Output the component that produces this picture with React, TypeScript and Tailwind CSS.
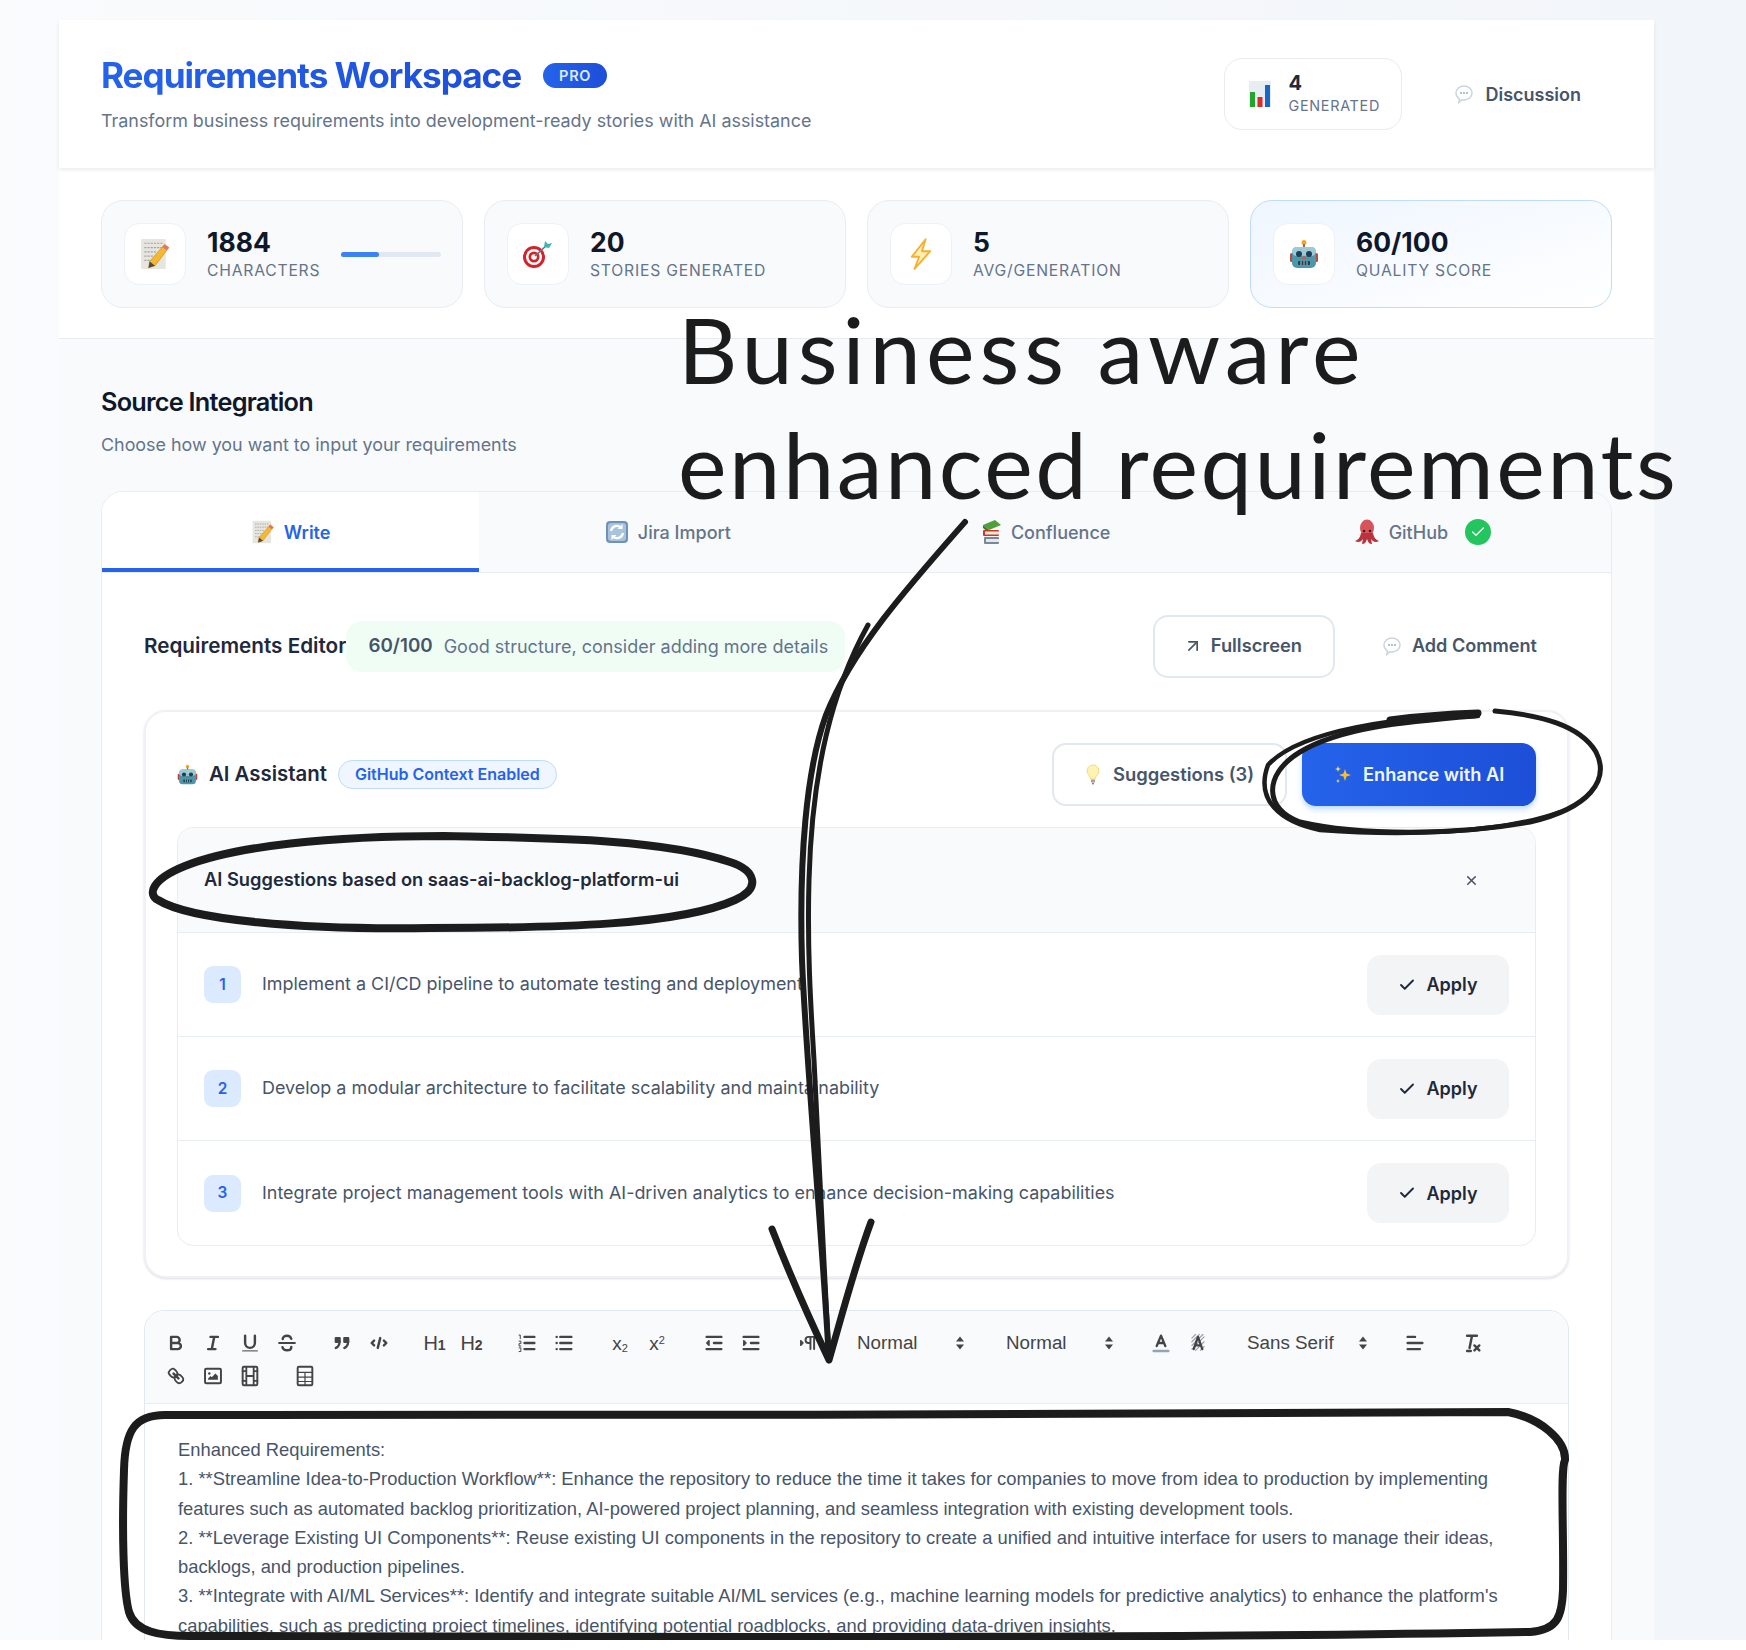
import type { ReactNode } from "react";
import { ArrowUpRight, Check, X } from "lucide-react";

function Notepad({ size = 32 }: { size?: number }) {
  return (
    <svg width={size} height={size} viewBox="0 0 30 30">
      <rect x="2" y="1" width="23" height="28" fill="#e7e5df" />
      <path d="M5 5h17M5 9h17M5 13h12M5 17h9M5 21h7" stroke="#a3a3a3" strokeWidth="1" strokeDasharray="2 1" />
      <path d="M24 6l4 3-13 17-6 2 1-6z" fill="#f5b82e" stroke="#c98a12" strokeWidth="0.6" />
      <path d="M24 6l4 3-2 2.6-4-3z" fill="#e2707a" />
      <path d="M10 22l5 4-6 2z" fill="#4b4b4b" />
    </svg>
  );
}

function Dart() {
  return (
    <svg width="32" height="30" viewBox="0 0 32 30">
      <circle cx="12" cy="18" r="11" fill="#d3222a" />
      <circle cx="12" cy="18" r="8" fill="#fff" />
      <circle cx="12" cy="18" r="5.500" fill="#d3222a" />
      <circle cx="12" cy="18" r="2.800" fill="#fff" />
      <path d="M13 17L25 6" stroke="#6b7280" strokeWidth="1.6" />
      <path d="M22 8l1-6 3 3 4-1-3 5z" fill="#3fb4b0" />
    </svg>
  );
}

function Bolt() {
  return (
    <svg width="24" height="32" viewBox="0 0 26 34">
      <path d="M18 1L3 20h8L6 33l17-19h-9z" fill="#fdeeb8" stroke="#f7b02e" strokeWidth="2" strokeLinejoin="round" />
    </svg>
  );
}

function Robot({ size = 30 }: { size?: number }) {
  return (
    <svg width={size} height={size} viewBox="0 0 30 30">
      <circle cx="15" cy="3.5" r="2.5" fill="#f5a623" />
      <rect x="14" y="5" width="2" height="4" fill="#8a6d5a" />
      <rect x="1" y="14" width="3" height="9" rx="1.5" fill="#c2453d" />
      <rect x="26" y="14" width="3" height="9" rx="1.5" fill="#c2453d" />
      <rect x="3" y="8" width="24" height="21" rx="5" fill="#4d97a8" />
      <rect x="3" y="8" width="24" height="9" rx="5" fill="#9ccbd6" />
      <circle cx="10" cy="15" r="3" fill="#1f3f52" />
      <circle cx="20" cy="15" r="3" fill="#1f3f52" />
      <path d="M15 16l-2 4h4z" fill="#d9534a" />
      <rect x="9" y="22" width="12" height="4" rx="1" fill="#1f3f52" />
      <path d="M12 22v4M15 22v4M18 22v4" stroke="#cfe3e8" strokeWidth="0.8" />
    </svg>
  );
}

function BarChart() {
  return (
    <svg width="24" height="28" viewBox="0 0 24 28">
      <rect x="1" y="1" width="22" height="26" fill="#e8edf2" />
      <rect x="2" y="12" width="5" height="15" fill="#22a52d" />
      <rect x="9.5" y="17" width="5" height="10" fill="#d32f2f" />
      <rect x="17" y="5" width="5" height="22" fill="#1667c7" />
    </svg>
  );
}

function Bubble() {
  return (
    <svg width="20" height="20" viewBox="0 0 20 20">
      <path d="M10 2c4.5 0 8 2.9 8 7s-3.500 7-8 7c-.8 0-1.500-.1-2.200-.3L5 18.500l.3-3.900C3.200 13.400 2 11.400 2 9c0-4.100 3.500-7 8-7z" fill="#fff" stroke="#cbd5e1" strokeWidth="1.500" />
      <circle cx="7" cy="9" r="0.9" fill="#94a3b8" />
      <circle cx="10" cy="9" r="0.9" fill="#94a3b8" />
      <circle cx="13" cy="9" r="0.9" fill="#94a3b8" />
    </svg>
  );
}

function JiraSync() {
  return (
    <svg width="24" height="24" viewBox="0 0 24 24">
      <rect x="1" y="1" width="22" height="22" rx="4" fill="#6f93b8" />
      <rect x="3" y="3" width="18" height="18" rx="3" fill="#a9c3dc" />
      <path d="M6 11a6 6 0 0 1 10.500-3M18 13a6 6 0 0 1-10.500 3" fill="none" stroke="#fff" strokeWidth="2.200" />
      <path d="M17.500 4v5h-5zM6.500 20v-5h5z" fill="#fff" />
    </svg>
  );
}

function Books() {
  return (
    <svg width="22" height="26" viewBox="0 0 22 26">
      <path d="M3 6l12-5 6 5-12 5z" fill="#4fa03a" />
      <path d="M3 6l6 5v3L3 9z" fill="#2e7d32" />
      <rect x="3" y="11" width="16" height="6" rx="1" fill="#c8382e" />
      <rect x="5" y="12.500" width="14" height="3" fill="#f4e7d3" />
      <rect x="4" y="18" width="15" height="7" rx="1" fill="#7b8794" />
      <rect x="6" y="20" width="13" height="3" fill="#e5e7eb" />
    </svg>
  );
}

function Octopus() {
  return (
    <svg width="26" height="26" viewBox="0 0 26 26">
      <ellipse cx="13" cy="9" rx="7" ry="8.500" fill="#d8545c" />
      <path d="M7 14c-1 5-3 7-6 8 3 2 6 1 8-2l-1 5c3 0 4-2 5-5 1 3 2 5 5 5l-1-5c2 3 5 4 8 2-3-1-5-3-6-8z" fill="#b8333c" />
      <circle cx="10" cy="12" r="1.300" fill="#3f1d20" />
      <circle cx="16" cy="12" r="1.300" fill="#3f1d20" />
    </svg>
  );
}

function Bulb() {
  return (
    <svg width="14" height="22" viewBox="0 0 14 22">
      <path d="M7 1a6 6 0 0 0-3.500 10.800c.8.800 1 1.700 1 3.200h5c0-1.500.2-2.400 1-3.200A6 6 0 0 0 7 1z" fill="#fdf3b4" stroke="#f3dd7a" strokeWidth="1" />
      <rect x="5" y="15.500" width="4" height="3" fill="#a8a29e" />
      <path d="M6 19h2l-1 2z" fill="#57534e" />
    </svg>
  );
}

function Sparkles() {
  return (
    <svg width="18" height="20" viewBox="0 0 18 20">
      <path d="M11 4l1.500 4.500L17 10l-4.500 1.500L11 16l-1.500-4.500L5 10l4.500-1.500z" fill="#fbbf24" />
      <path d="M4 1l.8 2.200L7 4l-2.200.8L4 7l-.8-2.200L1 4l2.200-.8z" fill="#fde047" />
      <path d="M4 14l.6 1.400L6 16l-1.400.6L4 18l-.6-1.400L2 16l1.400-.6z" fill="#fde047" />
    </svg>
  );
}

// quill style toolbar glyphs, 18 grid
function Q({ children }: { children: ReactNode }) {
  return (
    <svg width="22" height="22" viewBox="0 0 18 18" fill="none" stroke="#444" strokeWidth="2" strokeLinecap="round" strokeLinejoin="round">
      {children}
    </svg>
  );
}

function Btn({ children }: { children: ReactNode }) {
  return <span className="flex h-[34px] w-[37px] items-center justify-center text-[#444]">{children}</span>;
}

function Group({ children }: { children: ReactNode }) {
  return <div className="flex mr-[18.500px]">{children}</div>;
}

function Picker({ label, width }: { label: string; width: string }) {
  return (
    <div className={`flex h-[34px] items-center justify-between pl-[9px] pr-[11px] text-[18.800px] text-[#444] ${width}`}>
      <span>{label}</span>
      <svg width="12" height="20" viewBox="0 0 12 20" fill="#444">
        <path d="M6 3.500l4 5H2zM6 16.500l-4-5h8z" />
      </svg>
    </div>
  );
}

function Toolbar() {
  return (
    <div className="flex flex-wrap bg-[#f8fafc] border-b border-[#e8edf3] pl-[12px] pr-[12px] pt-[15px] pb-[10px] font-['Liberation_Sans',sans-serif]">
      <Group>
        <Btn><Q><path d="M5 4h4.500a2.500 2.500 0 0 1 0 5H5zM5 9h5.500a2.500 2.500 0 0 1 0 5H5z" /></Q></Btn>
        <Btn><Q><path d="M7 4h6M5 14h6M8 14l2-10" /></Q></Btn>
        <Btn><Q><path d="M5 3v6a4 4 0 0 0 8 0V3" /><path d="M3 15.500h12" strokeWidth="1" stroke="#666" /></Q></Btn>
        <Btn><Q><path d="M2.500 9h13" strokeWidth="1.500" /><path d="M12.500 5.500C12 3.800 10.500 3 9 3 7 3 5.500 4.200 5.500 5.800M12.500 12.200C12.500 14 11 15 9 15c-1.700 0-3.200-.8-3.700-2.500" /></Q></Btn>
      </Group>
      <Group>
        <Btn><Q><rect x="4" y="5" width="3" height="3" fill="#444" /><rect x="11" y="5" width="3" height="3" fill="#444" /><path d="M7 8c0 4-3 5-3 5M14 8c0 4-3 5-3 5" /></Q></Btn>
        <Btn><Q><path d="M5 7L3 9l2 2M13 7l2 2-2 2M10 5l-2 8" /></Q></Btn>
      </Group>
      <Group>
        <Btn><span className="text-[20px] font-['Liberation_Sans'] leading-none">H<span className="text-[14px] font-semibold">1</span></span></Btn>
        <Btn><span className="text-[20px] font-['Liberation_Sans'] leading-none">H<span className="text-[14px] font-semibold">2</span></span></Btn>
      </Group>
      <div className="flex mr-[19px]">
        <Btn><Q><path d="M7 4h8M7 9h8M7 14h8" /><path d="M2.500 2.500h1v3M2.500 7.500h1.500v2h-1.500v2h1.500M2.500 13h1.500v3h-1.500" strokeWidth="0.8" /></Q></Btn>
        <Btn><Q><path d="M6 4h9M6 9h9M6 14h9M3 4h0M3 9h0M3 14h0" /></Q></Btn>
      </div>
      <div className="flex mr-[20px]">
        <Btn><span className="text-[19px] leading-none font-medium">x<sub className="text-[11px]">2</sub></span></Btn>
        <Btn><span className="text-[19px] leading-none font-medium">x<sup className="text-[11px]">2</sup></span></Btn>
      </div>
      <div className="flex mr-[20px]">
        <Btn><Q><path d="M3 14h12M3 4h12M9 9h6" /><path d="M5 7L3 9l2 2z" fill="#444" strokeWidth="1" /></Q></Btn>
        <Btn><Q><path d="M3 14h12M3 4h12M9 9h6" /><path d="M3 7l2 2-2 2z" fill="#444" strokeWidth="1" /></Q></Btn>
      </div>
      <div className="flex mr-[21.500px]">
        <Btn><Q><path d="M3 11l2-2-2-2z" fill="#444" strokeWidth="1" /><path d="M15 4H9.500a2.500 2.500 0 0 0 0 5H11M11 4v10M14 4v10" strokeWidth="1.600" /></Q></Btn>
      </div>
      <Picker label="Normal" width="w-[129px] mr-[20px]" />
      <Picker label="Normal" width="w-[129px] mr-[16px]" />
      <div className="flex mr-[22px]">
        <Btn><Q><path d="M5.500 11.500L9 3l3.500 8.500M6.500 9h5" strokeWidth="1.900" /><path d="M3 15.500h12" stroke="#94a3b8" /></Q></Btn>
        <Btn><Q><path d="M4 5l3-3M4 8l6-6M4 11l9-9M4 14l10-10M7 15l7-7M11 15l3-3" stroke="#9ca3af" strokeWidth="1" /><path d="M5.500 14L9 4l3.500 10M6.500 11h5" strokeWidth="1.900" /></Q></Btn>
      </div>
      <Picker label="Sans Serif" width="w-[142px] mr-[16px]" />
      <div className="flex mr-[20px]">
        <Btn><Q><path d="M3 4h6M3 9h12M3 14h10" /></Q></Btn>
      </div>
      <div className="flex">
        <Btn><Q><path d="M5 3h8M9 3L7 13M5 15.500h3" /><path d="M11 11l4 4M15 11l-4 4" /></Q></Btn>
      </div>
      <div className="-mt-[1px] flex w-full">
        <Group>
          <Btn><Q><path d="M7 7l4 4" /><path d="M8.900 4.600a3.500 3.500 0 0 1 .4 4.700 3.500 3.500 0 0 1-4.700-.4C3.200 7.500 2 6.400 4.200 4.200S7.500 3.200 8.900 4.600z" strokeWidth="1.500" /><path d="M13.400 9.100a3.500 3.500 0 0 0-4.700-.4 3.500 3.500 0 0 0 .4 4.700c1.400 1.400 2.500 2.500 4.700.4s1-3.300-.4-4.700z" strokeWidth="1.500" /></Q></Btn>
          <Btn><Q><rect x="2.500" y="3" width="13" height="12" rx="1" strokeWidth="1.600" /><circle cx="6" cy="7" r="1" fill="#444" stroke="none" /><path d="M5 12v-1l2-2 1 1 3-3 2 2v3z" fill="#444" stroke="none" /></Q></Btn>
          <Btn><Q><rect x="3" y="1.500" width="12" height="15" rx="1" strokeWidth="1.600" /><path d="M6 9h6M3 5h3M3 13h3M12 5h3M12 13h3M6 1.500v15M12 1.500v15" strokeWidth="1.500" /></Q></Btn>
        </Group>
        <Btn><Q><rect x="3" y="1.500" width="12" height="15" rx="1" strokeWidth="1.600" /><path d="M3 6h12M3 10h12M3 13.500h12M9 6v10.500" strokeWidth="1" /></Q></Btn>
      </div>
    </div>
  );
}

function StatCard({ icon, value, label, extra, highlight }: { icon: ReactNode; value: string; label: string; extra?: ReactNode; highlight?: boolean }) {
  return (
    <div
      className={`flex h-[108px] items-center gap-[21px] rounded-[22px] border pl-[22px] ${
        highlight ? "border-[#bfdbfe] bg-gradient-to-br from-[#eff6ff] to-white" : "border-[#e8edf3] bg-[#f8fafc]"
      }`}
    >
      <div className="flex h-[62px] w-[62px] shrink-0 items-center justify-center rounded-[15px] border border-[#eef1f6] bg-white">{icon}</div>
      <div className="pb-[2px]">
        <div className="text-[26.500px] font-bold leading-[33px] text-[#0f172a]">{value}</div>
        <div className="mt-[2px] text-[15.700px] leading-[20px] tracking-[0.05em] text-[#64748b]">{label}</div>
      </div>
      {extra}
    </div>
  );
}

function Tab({ icon, label, active, extra }: { icon: ReactNode; label: string; active?: boolean; extra?: ReactNode }) {
  return (
    <div
      className={`flex h-full flex-1 items-center justify-center gap-[9px] text-[18px] ${
        active ? "border-b-4 border-[#2563eb] bg-white pt-[4px] font-semibold text-[#2563eb]" : "font-medium text-[#64748b]"
      }`}
    >
      {icon}
      <span>{label}</span>
      {extra}
    </div>
  );
}

const suggestions = [
  "Implement a CI/CD pipeline to automate testing and deployment",
  "Develop a modular architecture to facilitate scalability and maintainability",
  "Integrate project management tools with AI-driven analytics to enhance decision-making capabilities",
];

function Scribbles() {
  return (
    <svg className="pointer-events-none absolute left-0 top-0" width="1746" height="1640" viewBox="0 0 1746 1640" fill="none" stroke="#1c1c1c" strokeLinecap="round" strokeLinejoin="round">
      {/* long arrow */}
      <path d="M965 522C905 590 852 650 826 715C806 770 799 860 802 960C806 1060 821 1220 829 1360" strokeWidth="6" />
      <path d="M868 625C832 690 812 770 809 880C807 950 811 1010 814 1060C818 1150 824 1260 829 1360" strokeWidth="5" />
      <path d="M772 1229C790 1275 810 1320 829 1360C842 1315 855 1265 871 1222" strokeWidth="7" />
      {/* ring round the suggestions title */}
      <path d="M444 836C330 836 235 846 185 866C150 880 148 895 158 900C190 920 300 930 430 928C560 928 680 925 735 900C762 888 755 870 730 862C660 838 540 838 444 836Z" strokeWidth="8" />
      {/* ring round the enhance button */}
      <path d="M1475 716C1400 722 1340 728 1300 752C1262 775 1265 810 1300 822C1360 836 1460 835 1530 822C1590 808 1610 780 1596 752C1580 725 1540 715 1495 711" strokeWidth="5" />
      <path d="M1478 716C1400 716 1300 730 1268 765C1255 800 1280 822 1320 830C1400 836 1500 834 1560 812" strokeWidth="4.500" />
      <path d="M1390 720C1420 716 1450 714 1478 713" strokeWidth="7" />
      {/* box round the editor text */}
      <path d="M165 1415C135 1415 125 1430 124 1470C122 1530 123 1590 129 1612C135 1632 160 1636 190 1636C500 1636 1100 1640 1530 1632C1558 1630 1562 1616 1563 1590C1564 1530 1560 1470 1565 1460C1566 1440 1540 1418 1508 1412C1200 1414 500 1416 165 1415Z" strokeWidth="8" />
    </svg>
  );
}

export default function App() {
  return (
    <div className="bg-white font-['Inter',sans-serif]">
      <div className="relative h-[1640px] overflow-hidden bg-gradient-to-r from-[#f9fbfd] to-[#f2f5f9]">
        <div className="ml-[59px] w-[1595px] pt-[20px]">
          {/* Header */}
          <header className="relative flex h-[148px] items-start justify-between bg-white pl-[42px] pr-[73px] shadow-[0_2px_4px_rgba(0,0,0,0.08)]">
            <div className="pt-[30px]">
              <div className="flex items-center gap-[22px]">
                <h1 className="bg-gradient-to-r from-[#2563eb] to-[#1d4ed8] bg-clip-text text-[35.200px] font-bold leading-[50px] tracking-[-0.03em] text-transparent">
                  Requirements Workspace
                </h1>
                <span className="rounded-full bg-gradient-to-r from-[#2563eb] to-[#1d4ed8] px-[16px] py-[4px] text-[14.500px] font-semibold leading-[17px] tracking-[0.05em] text-[#dbeafe]">
                  PRO
                </span>
              </div>
              <p className="mt-[8px] text-[17.900px] leading-[26px] text-[#64748b]">
                Transform business requirements into development-ready stories with AI assistance
              </p>
            </div>
            <div className="flex items-center pt-[38px]">
              <div className="flex h-[72px] w-[178px] items-center gap-[16px] rounded-[18px] border border-[#e8ebf0] bg-white pl-[23px]">
                <BarChart />
                <div className="pb-[2px]">
                  <div className="text-[20px] font-bold leading-[24px] text-[#1e293b]">4</div>
                  <div className="mt-[2px] text-[14.400px] leading-[18px] tracking-[0.05em] text-[#64748b]">GENERATED</div>
                </div>
              </div>
              <div className="ml-[52px] flex items-center gap-[11px] text-[18px] font-semibold text-[#475569]">
                <Bubble />
                Discussion
              </div>
            </div>
          </header>

          {/* Stats */}
          <div className="grid h-[171px] grid-cols-4 gap-[21px] border-b border-[#e8ebf0] bg-white px-[42px] pt-[32px] pb-[31px]">
            <StatCard
              icon={<Notepad />}
              value="1884"
              label="CHARACTERS"
              extra={
                <div className="h-[5px] w-[100px] rounded-full bg-[#e2e8f0]">
                  <div className="h-full w-[38px] rounded-full bg-[#3b82f6]" />
                </div>
              }
            />
            <StatCard icon={<Dart />} value="20" label="STORIES GENERATED" />
            <StatCard icon={<Bolt />} value="5" label="AVG/GENERATION" />
            <StatCard icon={<Robot />} value="60/100" label="QUALITY SCORE" highlight />
          </div>

          {/* Source integration */}
          <section className="bg-[#f8fafc] px-[42px] pt-[46px]">
            <h2 className="text-[25.300px] font-semibold leading-[34px] tracking-[-0.03em] text-[#0f172a]">Source Integration</h2>
            <p className="mt-[13px] text-[17.900px] leading-[26px] text-[#64748b]">Choose how you want to input your requirements</p>

            <div className="mt-[33px] overflow-hidden rounded-t-[22px] border border-[#e8edf3] bg-white">
              <div className="flex h-[81px] border-b border-[#e8edf3] bg-[#f8fafc]">
                <Tab icon={<Notepad size={24} />} label="Write" active />
                <Tab icon={<JiraSync />} label="Jira Import" />
                <Tab icon={<Books />} label="Confluence" />
                <Tab
                  icon={<Octopus />}
                  label="GitHub"
                  extra={
                    <span className="ml-[8px] flex h-[26px] w-[26px] items-center justify-center rounded-full bg-[#22c55e]">
                      <Check size={16} strokeWidth={2} className="text-white" />
                    </span>
                  }
                />
              </div>

              <div className="px-[42px] pt-[41px]">
                {/* Editor header */}
                <div className="flex h-[64px] items-center justify-between">
                  <div className="flex items-center">
                    <h3 className="text-[20.700px] font-semibold text-[#1e293b]">Requirements Editor</h3>
                    <div className="flex h-[51px] w-[499px] items-center gap-[11px] rounded-[16px] bg-[#f0fdf4] pl-[22px]">
                      <span className="text-[18.800px] font-semibold text-[#475569]">60/100</span>
                      <span className="text-[18px] text-[#64748b]">Good structure, consider adding more details</span>
                    </div>
                  </div>
                  <div className="flex items-center pr-[32px]">
                    <div className="flex h-[63px] w-[182px] items-center justify-center gap-[8px] rounded-[15px] border-2 border-[#e2e8f0] pr-[3px] text-[18.300px] font-semibold text-[#475569]">
                      <ArrowUpRight size={20} strokeWidth={2} />
                      Fullscreen
                    </div>
                    <div className="ml-[47px] flex items-center gap-[10px] text-[18.100px] font-semibold text-[#475569]">
                      <Bubble />
                      Add Comment
                    </div>
                  </div>
                </div>

                {/* AI assistant */}
                <div className="mt-[32px] rounded-[22px] border-2 border-[#eef1f6] bg-white px-[31px] pt-[31px] pb-[30px] shadow-sm">
                  <div className="flex h-[63px] items-center justify-between">
                    <div className="flex items-center">
                      <Robot size={21} />
                      <span className="ml-[11px] text-[20.400px] font-semibold text-[#1e293b]">AI Assistant</span>
                      <span className="ml-[11px] flex h-[29px] items-center rounded-full border border-[#bfdbfe] bg-[#eff6ff] px-[16px] text-[16px] font-semibold text-[#2563eb]">
                        GitHub Context Enabled
                      </span>
                    </div>
                    <div className="flex items-center gap-[15px]">
                      <div className="flex h-[63px] w-[235px] items-center gap-[13px] rounded-[14px] border-2 border-[#e2e8f0] pl-[32px] text-[18.400px] font-semibold text-[#475569]">
                        <Bulb />
                        Suggestions (3)
                      </div>
                      <div className="flex h-[63px] w-[234px] items-center gap-[11px] rounded-[14px] bg-gradient-to-r from-[#2563eb] to-[#1d4ed8] pl-[32px] text-[18.200px] font-semibold text-[#eff6ff] shadow-md shadow-blue-200">
                        <Sparkles />
                        Enhance with AI
                      </div>
                    </div>
                  </div>

                  <div className="mt-[21px] overflow-hidden rounded-[16px] border border-[#e8edf3]">
                    <div className="flex h-[105px] items-center justify-between border-b border-[#e8edf3] bg-[#f8fafc] pl-[26px] pr-[56px]">
                      <span className="text-[18.300px] font-semibold text-[#1e293b]">AI Suggestions based on saas-ai-backlog-platform-ui</span>
                      <X size={15} strokeWidth={2.500} className="text-[#475569]" />
                    </div>
                    {suggestions.map((text, i) => (
                      <div key={text} className="flex h-[104px] items-center justify-between border-b border-[#e8edf3] pl-[26px] pr-[26px] last:border-b-0">
                        <div className="flex items-center gap-[21px]">
                          <span className="flex h-[37px] w-[37px] items-center justify-center rounded-[9px] bg-[#dbeafe] text-[15.400px] font-semibold text-[#2563eb]">
                            {i + 1}
                          </span>
                          <span className="text-[17.950px] text-[#475569]">{text}</span>
                        </div>
                        <div className="flex h-[60px] w-[142px] items-center justify-center gap-[10px] rounded-[14px] bg-[#f3f4f6] text-[18px] font-semibold text-[#1e293b]">
                          <Check size={18} strokeWidth={2.500} />
                          Apply
                        </div>
                      </div>
                    ))}
                  </div>
                </div>

                {/* Rich text editor */}
                <div className="mt-[32px] overflow-hidden rounded-t-[20px] border border-[#e2e8f0]">
                  <Toolbar />
                  <div className="bg-white px-[33px] pt-[31px] font-['Liberation_Sans',sans-serif] text-[18.380px] leading-[29.300px] text-[#475569]">
                    <p>Enhanced Requirements:</p>
                    <p>1. **Streamline Idea-to-Production Workflow**: Enhance the repository to reduce the time it takes for companies to move from idea to production by implementing features such as automated backlog prioritization, AI-powered project planning, and seamless integration with existing development tools.</p>
                    <p>2. **Leverage Existing UI Components**: Reuse existing UI components in the repository to create a unified and intuitive interface for users to manage their ideas, backlogs, and production pipelines.</p>
                    <p>3. **Integrate with AI/ML Services**: Identify and integrate suitable AI/ML services (e.g., machine learning models for predictive analytics) to enhance the platform's capabilities, such as predicting project timelines, identifying potential roadblocks, and providing data-driven insights.</p>
                  </div>
                </div>
              </div>
            </div>
          </section>
        </div>

        {/* Hand written annotation on top of the screenshot */}
        <Scribbles />
        <div className="absolute left-[678px] top-[299px] whitespace-nowrap text-[92px] leading-[100px] tracking-[0.054em] text-[#1c1c1c] font-['Lato',sans-serif]">Business aware</div>
        <div className="absolute left-[678px] top-[414px] whitespace-nowrap text-[92px] leading-[100px] tracking-[0.027em] text-[#1c1c1c] font-['Lato',sans-serif]">enhanced requirements</div>
      </div>
      <div className="h-[10px] bg-white" />
    </div>
  );
}
